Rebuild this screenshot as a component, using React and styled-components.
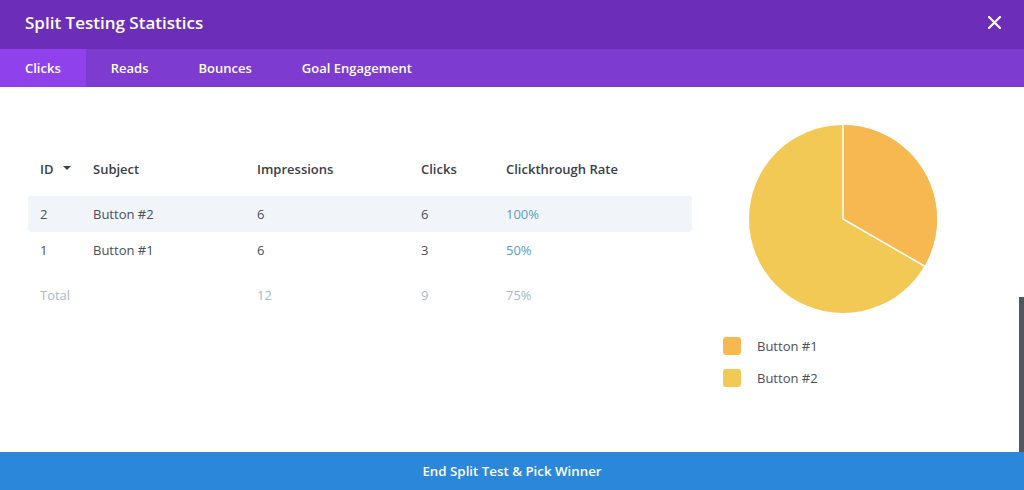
import React from "react";
import styled, { createGlobalStyle } from "styled-components";

const Global = createGlobalStyle`
  html, body { margin: 0; padding: 0; background: #fff; }
  body { font-family: "Open Sans", "Noto Sans", sans-serif; -webkit-font-smoothing: antialiased; }
  * { box-sizing: border-box; }
`;

const Modal = styled.div`
  width: 1024px;
  height: 490px;
  display: flex;
  flex-direction: column;
  overflow: hidden;
`;

const Header = styled.div`
  height: 49px;
  background: #6c2eb9;
  display: flex;
  align-items: center;
  justify-content: space-between;
  padding: 0 22px 5px 25px;
`;

const Title = styled.h1`
  margin: 0;
  color: #fff;
  font-size: 17px;
  font-weight: 600;
  letter-spacing: 0;
`;

const Close = styled.button`
  border: 0;
  background: transparent;
  padding: 0;
  width: 16px;
  height: 16px;
  display: flex;
  align-items: center;
  justify-content: center;
  cursor: pointer;
`;

const Tabs = styled.div`
  height: 38px;
  background: #7e3bd0;
  display: flex;
`;

const Tab = styled.div`
  padding: 0 25px;
  display: flex;
  align-items: center;
  color: #fff;
  font-size: 13px;
  font-weight: 600;
  background: ${(p) => (p.$active ? "#8f42ec" : "transparent")};
`;

const Body = styled.div`
  position: relative;
  flex: 1;
  display: flex;
  padding: 37px 0 0 28px;
`;

const Table = styled.div`
  width: 664px;
  margin-top: 27px;
  display: flex;
  flex-direction: column;
`;

const Row = styled.div`
  display: grid;
  grid-template-columns: 53px 164px 164px 85px 1fr;
  align-items: center;
  height: ${(p) => p.$h || 36}px;
  padding-left: 12px;
  border-radius: 4px;
  background: ${(p) => (p.$hl ? "#f1f4f8" : "transparent")};
  margin-bottom: ${(p) => p.$mb || 0}px;
  margin-top: ${(p) => p.$mt || 0}px;
`;

const Cell = styled.div`
  font-size: 13px;
  font-weight: ${(p) => (p.$head ? 600 : 500)};
  color: ${(p) =>
    p.$tone === "head" ? "#3a4048" : p.$tone === "link" ? "#5b9dbf" : p.$tone === "total" ? "#a9b7c6" : "#47505c"};
  display: flex;
  align-items: center;
  gap: 9px;
`;

const Caret = styled.span`
  width: 0;
  height: 0;
  border-left: 4px solid transparent;
  border-right: 4px solid transparent;
  border-top: 4px solid #3a4048;
  margin-top: -2px;
`;

const ChartCol = styled.div`
  margin-left: 31px;
  display: flex;
  flex-direction: column;
`;

const PieWrap = styled.div`
  margin-left: 25px;
  width: 190px;
  height: 190px;
`;

const Legend = styled.div`
  margin-top: 23px;
  display: flex;
  flex-direction: column;
  gap: 14px;
`;

const LegendItem = styled.div`
  display: flex;
  align-items: center;
  gap: 16px;
  font-size: 13px;
  font-weight: 500;
  color: #47505c;
`;

const Swatch = styled.span`
  width: 18px;
  height: 18px;
  border-radius: 3px;
  background: ${(p) => p.$c};
`;

const Scrollbar = styled.div`
  position: absolute;
  right: 0;
  top: 210px;
  bottom: 0;
  width: 5px;
  background: #50575e;
`;

const Footer = styled.button`
  height: 38px;
  border: 0;
  background: #2b87da;
  color: #fff;
  font-family: inherit;
  font-size: 13.3px;
  font-weight: 600;
  width: 100%;
  cursor: pointer;
`;

const rows = [
  { id: "2", subject: "Button #2", imp: "6", clicks: "6", rate: "100%", hl: true },
  { id: "1", subject: "Button #1", imp: "6", clicks: "3", rate: "50%" },
];

function Pie() {
  const cx = 95, cy = 95, r = 94;
  const a = (2 * Math.PI) / 3;
  const x = cx + r * Math.sin(a);
  const y = cy - r * Math.cos(a);
  return (
    <svg width="190" height="190" viewBox="0 0 190 190">
      <circle cx={cx} cy={cy} r={r} fill="#f3c955" />
      <path d={`M${cx} ${cy} L${cx} ${cy - r} A${r} ${r} 0 0 1 ${x} ${y} Z`} fill="#f7b751" />
      <line x1={cx} y1={cy} x2={cx} y2={cy - r} stroke="#fff" strokeWidth="1.5" />
      <line x1={cx} y1={cy} x2={x} y2={y} stroke="#fff" strokeWidth="1.5" />
    </svg>
  );
}

export default function App() {
  return (
    <>
      <Global />
      <Modal>
        <Header>
          <Title>Split Testing Statistics</Title>
          <Close aria-label="close">
            <svg width="13" height="13" viewBox="0 0 13 13">
              <path d="M1 1L12 12M12 1L1 12" stroke="#fff" strokeWidth="2.2" strokeLinecap="round" />
            </svg>
          </Close>
        </Header>
        <Tabs>
          <Tab $active>Clicks</Tab>
          <Tab>Reads</Tab>
          <Tab>Bounces</Tab>
          <Tab>Goal Engagement</Tab>
        </Tabs>
        <Body>
          <Table>
            <Row $h={36} $mb={9}>
              <Cell $head $tone="head">ID <Caret /></Cell>
              <Cell $head $tone="head">Subject</Cell>
              <Cell $head $tone="head">Impressions</Cell>
              <Cell $head $tone="head">Clicks</Cell>
              <Cell $head $tone="head">Clickthrough Rate</Cell>
            </Row>
            {rows.map((r) => (
              <Row key={r.id} $hl={r.hl}>
                <Cell>{r.id}</Cell>
                <Cell>{r.subject}</Cell>
                <Cell>{r.imp}</Cell>
                <Cell>{r.clicks}</Cell>
                <Cell $tone="link">{r.rate}</Cell>
              </Row>
            ))}
            <Row $h={36} $mt={9}>
              <Cell $tone="total">Total</Cell>
              <Cell $tone="total"></Cell>
              <Cell $tone="total">12</Cell>
              <Cell $tone="total">9</Cell>
              <Cell $tone="total">75%</Cell>
            </Row>
          </Table>
          <ChartCol>
            <PieWrap>
              <Pie />
            </PieWrap>
            <Legend>
              <LegendItem><Swatch $c="#f7b751" />Button #1</LegendItem>
              <LegendItem><Swatch $c="#f3c955" />Button #2</LegendItem>
            </Legend>
          </ChartCol>
          <Scrollbar />
        </Body>
        <Footer>End Split Test &amp; Pick Winner</Footer>
      </Modal>
    </>
  );
}
